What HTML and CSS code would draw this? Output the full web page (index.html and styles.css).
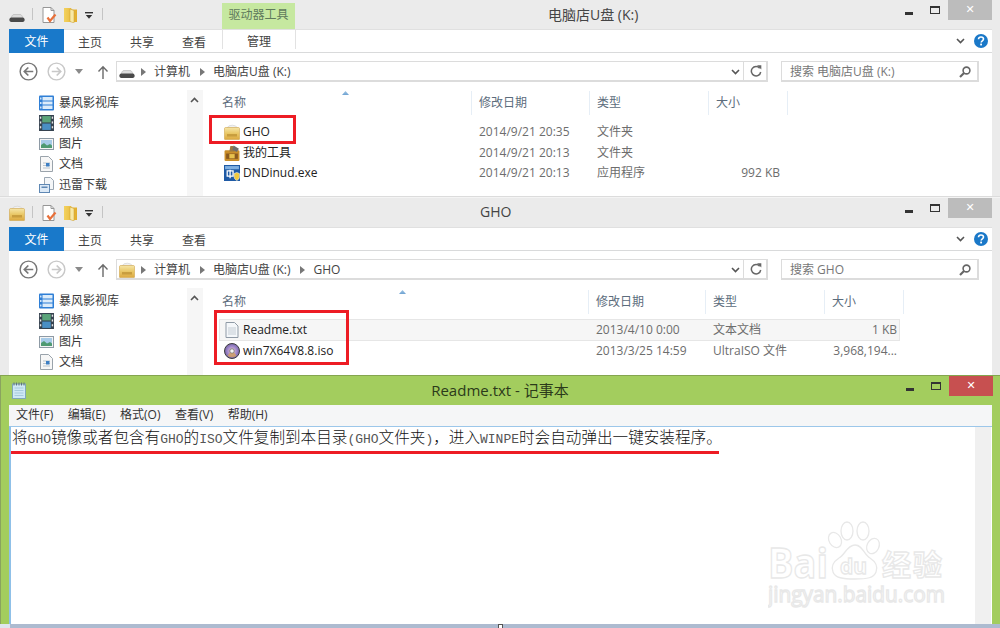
FILE: index.html
```html
<!DOCTYPE html>
<html lang="zh-CN">
<head>
<meta charset="utf-8">
<title>Readme.txt - 记事本</title>
<link rel="stylesheet" href="styles.css">
</head>
<body>
<svg class="sprite" width="0" height="0" aria-hidden="true">
  <defs>
    <linearGradient id="gold" x1="0" y1="0" x2="0" y2="1"><stop offset="0" stop-color="#f6e6a8"/><stop offset=".5" stop-color="#e9c766"/><stop offset="1" stop-color="#dca941"/></linearGradient>
    <linearGradient id="qaf" x1="0" y1="0" x2="1" y2="0"><stop offset="0" stop-color="#f3d25f"/><stop offset="1" stop-color="#e2ad2c"/></linearGradient>
    <radialGradient id="disc" cx=".5" cy=".5" r=".55"><stop offset="0" stop-color="#f2d9b0"/><stop offset=".5" stop-color="#a98fd0"/><stop offset="1" stop-color="#6a5aa0"/></radialGradient>
    <symbol id="i-drive" viewBox="0 0 16 9"><path d="M1 7l2.200-4.400C3.600 2 4 1.500 5 1.500h6c1 0 1.400.5 1.800 1.100L15 7z" fill="#dcdcdc" stroke="#a8a8a8" stroke-width=".5"/><rect x=".5" y="4.500" width="15" height="4.500" rx="1.800" fill="#4a4a4a"/></symbol>
    <symbol id="i-gho" viewBox="0 0 16 16"><path d="M3 4a5.500 4 0 0 1 10.500 0z" fill="#f1f1f1" stroke="#cfcfcf" stroke-width=".6"/><path d="M.5 4.500C.5 4 1 3.500 1.500 3.500h13c.5 0 1 .5 1 1V15a.5.5 0 0 1-.5.5H1a.5.5 0 0 1-.5-.5z" fill="url(#gold)" stroke="#d0a64e" stroke-width=".6"/><rect x="3" y="10" width="10" height="2.500" fill="#b98c30" opacity=".65"/></symbol>
    <symbol id="i-doc" viewBox="0 0 15 16"><path d="M1 .5h8L12 3.500v12H1z" fill="#fff" stroke="#969696"/><path d="M9 .5v3h3" fill="none" stroke="#969696"/><path d="M5.500 10.500l2.500 3.500 5.500-6.500" fill="none" stroke="#e8703a" stroke-width="2.200"/></symbol>
    <symbol id="i-qaf" viewBox="0 0 13 16"><path d="M0 1h7l1 1.500h5V15H0z" fill="url(#qaf)"/><path d="M6 2l4 1.500V16l-4-1.500z" fill="#f8e9a6" stroke="#c9982a" stroke-width=".5"/></symbol>
    <symbol id="i-drop" viewBox="0 0 8 7"><rect y="0" width="8" height="1.400" fill="#333"/><path d="M.8 3h6.400L4 6.800z" fill="#333"/></symbol>
    <symbol id="i-back" viewBox="0 0 20 20"><circle cx="10" cy="10" r="8.800" fill="#fff" stroke="currentColor" stroke-width="1.500"/><path d="M15 10H6M9.800 5.800L5.600 10l4.200 4.200" fill="none" stroke="currentColor" stroke-width="1.800"/></symbol>
    <symbol id="i-fwd" viewBox="0 0 20 20"><circle cx="10" cy="10" r="8.800" fill="#fff" stroke="currentColor" stroke-width="1.500"/><path d="M5 10h9M10.200 5.800l4.200 4.200-4.200 4.200" fill="none" stroke="currentColor" stroke-width="1.800"/></symbol>
    <symbol id="i-caret" viewBox="0 0 8 5"><path d="M0 0h8L4 5z" fill="#8a8a8a"/></symbol>
    <symbol id="i-up" viewBox="0 0 12 14"><path d="M6 14V2M1.500 6.500L6 1.800l4.500 4.700" fill="none" stroke="#6a6a6a" stroke-width="1.400"/></symbol>
    <symbol id="i-crumb" viewBox="0 0 5 8"><path d="M0 0l5 4-5 4z" fill="#777"/></symbol>
    <symbol id="i-chev" viewBox="0 0 9 6"><path d="M1 1l3.500 3.500L8 1" fill="none" stroke="#555" stroke-width="1.600"/></symbol>
    <symbol id="i-refresh" viewBox="0 0 12 12"><path d="M9.700 3.200A4.700 4.700 0 1 0 10.700 7" fill="none" stroke="#666" stroke-width="1.500"/><path d="M7 .2h4.300v4.300z" fill="#666"/></symbol>
    <symbol id="i-search" viewBox="0 0 12 12"><circle cx="7.500" cy="4.500" r="3.400" fill="none" stroke="#666" stroke-width="1.600"/><path d="M5 7L1 11" stroke="#666" stroke-width="2.200"/></symbol>
    <symbol id="i-help" viewBox="0 0 14 14"><circle cx="7" cy="7" r="7" fill="#1a78c8"/><path d="M4.500 5.200C4.600 3.700 5.700 3 7 3c1.400 0 2.500.8 2.500 2.100 0 1.800-2.300 1.800-2.300 3.500" fill="none" stroke="#fff" stroke-width="1.600"/><rect x="6.200" y="9.600" width="1.800" height="1.800" fill="#fff"/></symbol>
    <symbol id="i-lib" viewBox="0 0 15 15"><rect width="15" height="15" rx="1" fill="#2f7fd6"/><rect x="3.500" y="1.500" width="10" height="3.500" fill="#dcecfa"/><rect x="3.500" y="6" width="10" height="3" fill="#dcecfa"/><rect x="3.500" y="10" width="10" height="3.500" fill="#dcecfa"/><rect x="1" y="2" width="1.500" height="2" fill="#cfe4f8"/><rect x="1" y="6.500" width="1.500" height="2" fill="#cfe4f8"/><rect x="1" y="11" width="1.500" height="2" fill="#cfe4f8"/></symbol>
    <symbol id="i-film" viewBox="0 0 14 15"><rect width="14" height="15" fill="#35424f"/><rect x="3" y="1" width="8" height="6" fill="#5aa47a"/><rect x="3" y="8" width="8" height="6" fill="#4a8fc4"/><rect x=".8" y="1.500" width="1.300" height="2" fill="#e6e6e6"/><rect x=".8" y="6" width="1.300" height="2" fill="#e6e6e6"/><rect x=".8" y="10.500" width="1.300" height="2" fill="#e6e6e6"/><rect x="11.900" y="1.500" width="1.300" height="2" fill="#e6e6e6"/><rect x="11.900" y="6" width="1.300" height="2" fill="#e6e6e6"/><rect x="11.900" y="10.500" width="1.300" height="2" fill="#e6e6e6"/></symbol>
    <symbol id="i-pic" viewBox="0 0 15 12"><rect x=".5" y=".5" width="14" height="11" fill="#f4f4f4" stroke="#8e9aa5"/><rect x="2" y="2" width="11" height="8" fill="#a7cbe8"/><path d="M2 10V7l3-2 3 2.500L11 6l2 1.500V10z" fill="#4f9a72"/></symbol>
    <symbol id="i-file" viewBox="0 0 13 16"><path d="M.5.500h8l4 4v11H.5z" fill="#f7f7f7" stroke="#9aa3ab"/><path d="M3 7h7M3 9.500h7M3 12h7" stroke="#b9c4cd"/><rect x="6" y="7" width="3.500" height="3.500" fill="#3d7fc4"/></symbol>
    <symbol id="i-dl" viewBox="0 0 15 16"><path d="M5.500.5h6l3 3v9h-9z" fill="#f4f6f8" stroke="#9aa6b2"/><rect x=".5" y="7.500" width="10" height="8" fill="#dce9f6" stroke="#5f88b4"/><rect x="2.500" y="9.500" width="6" height="1.500" fill="#5f88b4"/></symbol>
    <symbol id="i-tool" viewBox="0 0 15 15"><rect x=".5" y="5" width="14" height="10" rx="1" fill="#c98e2a"/><rect x="2" y="8" width="11" height="5" fill="#8a5a20"/><path d="M6 1l3 0 1 5H5z" fill="#9a7a45"/><path d="M9 .5l5 3-2 3-4-2z" fill="#6e6e6e"/><rect x="5" y="8.500" width="5" height="4" fill="#e7c14d"/></symbol>
    <symbol id="i-exe" viewBox="0 0 15 15"><rect width="15" height="15" fill="#1f5aa5"/><rect x="1" y="1" width="13" height="3" fill="#7fb0e2"/><path d="M3 5.500h5.500v5H3zM5.700 4.500v8" fill="none" stroke="#fff" stroke-width="1.200"/><path d="M9.500 8l2.500-1 2.500 1v3c0 2-1.500 3-2.500 3.500-1-.5-2.500-1.500-2.500-3.500z" fill="#f2c93c" stroke="#fff" stroke-width=".5"/></symbol>
    <symbol id="i-txt" viewBox="0 0 13 16"><path d="M.5.500h8.500l3.500 3.500v11.500H.5z" fill="#f4f7fa" stroke="#8f9aa6"/><path d="M2.500 6h8M2.500 8h8M2.500 10h8M2.500 12h8" stroke="#c4ccd4"/></symbol>
    <symbol id="i-iso" viewBox="0 0 16 16"><circle cx="8" cy="8" r="7.500" fill="url(#disc)" stroke="#3c3c3c"/><path d="M3.500 12.500A6.400 6.400 0 0 0 12.500 12.500L10 9.500h-4z" fill="#d7a35a" opacity=".75"/><circle cx="8" cy="8" r="2.200" fill="#f4f4f4" stroke="#555" stroke-width=".6"/></symbol>
    <symbol id="i-note" viewBox="0 0 14 17"><rect x=".5" y="2" width="13" height="14.500" fill="#cfe8f4" stroke="#7fa7b8"/><path d="M2.500 6h9M2.500 8.500h9M2.500 11h9M2.500 13.500h9" stroke="#a6cbdc"/><path d="M2 .5v3M4.500.5v3M7 .5v3M9.500.5v3M12 .5v3" stroke="#60727c"/></symbol>
  </defs>
</svg>

<main class="desktop">
  <section class="explorer first">
    <header class="titlebar">
      <div class="quick">
        <svg class="qa-drive"><use href="#i-drive"/></svg>
        <span class="qa-sep"></span>
        <svg class="qa-doc"><use href="#i-doc"/></svg>
        <svg class="qa-folder"><use href="#i-qaf"/></svg>
        <svg class="qa-drop"><use href="#i-drop"/></svg>
        <span class="qa-sep"></span>
      </div>
      <div class="context-tab">驱动器工具</div>
      <h1 class="win-title title-first">电脑店U盘 (K:)</h1>
      <div class="win-controls">
        <span class="ctl-min"></span><span class="ctl-max"></span><span class="ctl-close">✕</span>
      </div>
    </header>
    <nav class="ribbon">
      <span class="tab tab-file">文件</span>
      <span class="tab">主页</span>
      <span class="tab">共享</span>
      <span class="tab">查看</span>
      <span class="tab tab-manage">管理</span>
      <svg class="rb-chev"><use href="#i-chev"/></svg>
      <svg class="rb-help"><use href="#i-help"/></svg>
    </nav>
    <div class="navbar">
      <svg class="nv-back"><use href="#i-back"/></svg>
      <svg class="nv-fwd"><use href="#i-fwd"/></svg>
      <svg class="nv-caret"><use href="#i-caret"/></svg>
      <svg class="nv-up"><use href="#i-up"/></svg>
      <div class="address">
        <svg class="ad-drive"><use href="#i-drive"/></svg>
        <svg class="crumb"><use href="#i-crumb"/></svg><span>计算机</span>
        <svg class="crumb"><use href="#i-crumb"/></svg><span>电脑店U盘 (K:)</span>
        <svg class="ad-chev"><use href="#i-chev"/></svg>
        <span class="ad-refresh"><svg><use href="#i-refresh"/></svg></span>
      </div>
      <div class="search"><span>搜索 电脑店U盘 (K:)</span><svg><use href="#i-search"/></svg></div>
    </div>
    <div class="content">
      <aside class="sidebar">
        <div class="side-item"><svg><use href="#i-lib"/></svg>暴风影视库</div>
        <div class="side-item"><svg><use href="#i-film"/></svg>视频</div>
        <div class="side-item"><svg><use href="#i-pic"/></svg>图片</div>
        <div class="side-item"><svg><use href="#i-file"/></svg>文档</div>
        <div class="side-item"><svg><use href="#i-dl"/></svg>迅雷下载</div>
      </aside>
      <div class="side-scroll"><svg class="scroll-up"><use href="#i-chev"/></svg></div>
      <div class="files cols-first">
        <div class="file-head">
          <span>名称<i class="sort"></i></span><span>修改日期</span><span>类型</span><span>大小</span>
        </div>
        <div class="file-row"><span class="fname"><svg><use href="#i-gho"/></svg>GHO</span><span>2014/9/21 20:35</span><span>文件夹</span><span></span></div>
        <div class="file-row"><span class="fname"><svg><use href="#i-tool"/></svg>我的工具</span><span>2014/9/21 20:13</span><span>文件夹</span><span></span></div>
        <div class="file-row"><span class="fname"><svg><use href="#i-exe"/></svg>DNDinud.exe</span><span>2014/9/21 20:13</span><span>应用程序</span><span class="fsize">992 KB</span></div>
        <span class="redbox redbox-gho"></span>
      </div>
    </div>
  </section>

  <section class="explorer second">
    <header class="titlebar">
      <div class="quick">
        <svg class="qa-gho"><use href="#i-gho"/></svg>
        <span class="qa-sep"></span>
        <svg class="qa-doc"><use href="#i-doc"/></svg>
        <svg class="qa-folder"><use href="#i-qaf"/></svg>
        <svg class="qa-drop"><use href="#i-drop"/></svg>
        <span class="qa-sep"></span>
      </div>
      <h1 class="win-title title-second">GHO</h1>
      <div class="win-controls">
        <span class="ctl-min"></span><span class="ctl-max"></span><span class="ctl-close">✕</span>
      </div>
    </header>
    <nav class="ribbon">
      <span class="tab tab-file">文件</span>
      <span class="tab">主页</span>
      <span class="tab">共享</span>
      <span class="tab">查看</span>
      <svg class="rb-chev"><use href="#i-chev"/></svg>
      <svg class="rb-help"><use href="#i-help"/></svg>
    </nav>
    <div class="navbar">
      <svg class="nv-back"><use href="#i-back"/></svg>
      <svg class="nv-fwd"><use href="#i-fwd"/></svg>
      <svg class="nv-caret"><use href="#i-caret"/></svg>
      <svg class="nv-up"><use href="#i-up"/></svg>
      <div class="address">
        <svg class="ad-gho"><use href="#i-gho"/></svg>
        <svg class="crumb"><use href="#i-crumb"/></svg><span>计算机</span>
        <svg class="crumb"><use href="#i-crumb"/></svg><span>电脑店U盘 (K:)</span>
        <svg class="crumb"><use href="#i-crumb"/></svg><span>GHO</span>
        <svg class="ad-chev"><use href="#i-chev"/></svg>
        <span class="ad-refresh"><svg><use href="#i-refresh"/></svg></span>
      </div>
      <div class="search"><span>搜索 GHO</span><svg><use href="#i-search"/></svg></div>
    </div>
    <div class="content">
      <aside class="sidebar">
        <div class="side-item"><svg><use href="#i-lib"/></svg>暴风影视库</div>
        <div class="side-item"><svg><use href="#i-film"/></svg>视频</div>
        <div class="side-item"><svg><use href="#i-pic"/></svg>图片</div>
        <div class="side-item"><svg><use href="#i-file"/></svg>文档</div>
      </aside>
      <div class="side-scroll"><svg class="scroll-up"><use href="#i-chev"/></svg></div>
      <div class="files cols-second">
        <div class="file-head">
          <span>名称<i class="sort"></i></span><span>修改日期</span><span>类型</span><span>大小</span>
        </div>
        <div class="file-row selected"><span class="fname"><svg><use href="#i-txt"/></svg>Readme.txt</span><span>2013/4/10 0:00</span><span>文本文档</span><span class="fsize">1 KB</span></div>
        <div class="file-row"><span class="fname"><svg><use href="#i-iso"/></svg>win7X64V8.8.iso</span><span>2013/3/25 14:59</span><span>UltraISO 文件</span><span class="fsize">3,968,194...</span></div>
        <span class="redbox redbox-files"></span>
      </div>
    </div>
  </section>

  <section class="notepad">
    <header class="np-title">
      <svg class="np-icon"><use href="#i-note"/></svg>
      <h1 class="np-name">Readme.txt - 记事本</h1>
      <div class="win-controls np-controls">
        <span class="ctl-min"></span><span class="ctl-max"></span><span class="ctl-close">✕</span>
      </div>
    </header>
    <div class="np-menu">
      <span>文件(F)</span><span>编辑(E)</span><span>格式(O)</span><span>查看(V)</span><span>帮助(H)</span>
    </div>
    <div class="np-body">
      <div class="np-text">
        <p>将<b>GHO</b>镜像或者包含有<b>GHO</b>的<b>ISO</b>文件复制到本目录<b>(GHO</b>文件夹<b>)</b>&#xFF0C;进入<b>WINPE</b>时会自动弹出一键安装程序。</p>
        <span class="red-underline"></span>
      </div>
      <div class="np-scroll"></div>
    </div>
    <svg class="watermark" viewBox="0 0 180 92" width="180" height="92">
      <text class="wm-big" x="0" y="58" textLength="60" lengthAdjust="spacingAndGlyphs">Bai</text>
      <ellipse class="wm-shape" cx="67" cy="20" rx="6" ry="8" transform="rotate(-30 67 20)"/>
      <ellipse class="wm-shape" cx="79" cy="11" rx="6" ry="9"/>
      <ellipse class="wm-shape" cx="95" cy="11" rx="6" ry="9"/>
      <ellipse class="wm-shape" cx="105" cy="26" rx="6" ry="8" transform="rotate(25 105 26)"/>
      <path class="wm-shape" d="M87 25c8 0 9 10 15 13 6 4 8 9 6 14-2 6-9 7-21 7s-20-1-22-7c-2-5 0-10 6-14 6-3 8-13 16-13z"/>
      <text class="wm-du" x="72" y="54">du</text>
      <text class="wm-cn" x="114" y="56" textLength="60">经验</text>
      <text class="wm-url" x="0" y="82" textLength="177" lengthAdjust="spacingAndGlyphs">jingyan.baidu.com</text>
    </svg>
    <div class="np-bottom"><span class="np-corner"></span><span class="np-handle"></span></div>
  </section>
</main>
</body>
</html>
```
FILE: styles.css
```css
* { box-sizing: border-box; }
html, body { margin: 0; padding: 0; }
body {
  width: 1000px;
  height: 628px;
  overflow: hidden;
  background: #fff;
  font: 12px/1.2 "Open Sans", "Noto Sans CJK SC", sans-serif;
  color: #333;
}
.sprite { position: absolute; }
svg { display: block; flex: none; }
h1 { margin: 0; font-weight: 400; }
.desktop { display: flex; flex-direction: column; width: 1000px; height: 628px; }

/* Explorer window */
.explorer {
  display: flex;
  flex-direction: column;
  background: #ebebeb;
  padding: 0 8px 0 9px;
  overflow: hidden;
  flex: none;
  border-bottom: 1px solid #dcdcdc;
}
.first { height: 197px; }
.second { height: 178px; border-top: 1px solid #f4f4f4; border-bottom: 0; }

.titlebar {
  position: relative;
  height: 29px;
  flex: none;
  margin-left: -9px;
  margin-right: -8px;
  padding-left: 9px;
}
.quick { display: flex; align-items: center; height: 28px; }
.qa-drive { width: 16px; height: 9px; margin-top: 7px; }
.qa-gho { width: 16px; height: 16px; margin-top: 1px; }
.qa-sep { width: 1px; height: 12px; background: #c4c4c4; margin: 0 0 0 7px; }
.qa-doc { width: 15px; height: 16px; margin: 2px 0 0 9px; }
.qa-folder { width: 13px; height: 16px; margin: 2px 0 0 7px; }
.qa-drop { width: 8px; height: 7px; margin: 3px 0 0 8px; }
.qa-drop + .qa-sep { margin-left: 9px; }
.context-tab {
  position: absolute;
  left: 222px;
  top: 3px;
  width: 73px;
  height: 26px;
  padding-top: 5px;
  text-align: center;
  background: #c6e8a0;
  color: #5f7a5c;
}
.win-title {
  position: absolute;
  top: 5px;
  font-size: 14px;
  line-height: 20px;
  color: #444;
  white-space: nowrap;
}
.title-first { left: 548px; }
.title-second { left: 480px; top: 4px; }
.win-controls {
  position: absolute;
  right: 8px;
  top: 0;
  display: flex;
  width: 88px;
  height: 20px;
}
.ctl-min { width: 8px; height: 3px; background: #333; margin: 12px 0 0 1px; }
.ctl-max { width: 10px; height: 8px; border: 1px solid #333; border-top-width: 2px; margin: 6px 0 0 17px; }
.ctl-close {
  width: 44px;
  height: 20px;
  margin-left: 8px;
  background: #bcbcbc;
  color: #fff;
  font: 700 11px/20px "DejaVu Sans", sans-serif;
  text-align: center;
}

.ribbon {
  position: relative;
  display: flex;
  flex: none;
  height: 24px;
  background: #fff;
  border-top: 1px solid #e0e0e0;
  border-bottom: 1px solid #d9dadb;
}
.tab {
  width: 52px;
  line-height: 25px;
  text-align: center;
  color: #444;
}
.tab-file {
  width: 55px;
  height: 24px;
  margin-top: -1px;
  line-height: 26px;
  background: #1979ca;
  color: #fff;
}
.tab-manage {
  position: absolute;
  left: 213px;
  top: 0;
  width: 74px;
  height: 19px;
  line-height: 24px;
  border-left: 1px solid #e2e2e2;
  border-right: 1px solid #e2e2e2;
}
.rb-chev { position: absolute; right: 27px; top: 8px; width: 9px; height: 6px; }
.rb-help { position: absolute; right: 4px; top: 4px; width: 14px; height: 14px; }

.navbar {
  position: relative;
  display: flex;
  flex: none;
  align-items: center;
  height: 35px;
  padding: 2px 0 0 10px;
  background: #fff;
  color: #444;
}
.nv-back { width: 19px; height: 19px; color: #777; }
.nv-fwd { width: 19px; height: 19px; margin-left: 9px; color: #c8c8c8; }
.nv-caret { width: 8px; height: 5px; margin-left: 9px; }
.nv-up { width: 12px; height: 14px; margin-left: 14px; }
.address {
  display: flex;
  align-items: center;
  width: 652px;
  height: 21px;
  margin-left: 7px;
  padding-top: 2px;
  border: 1px solid #dcdcdc;
  border-width: 1px 2px 2px 1px;
  position: relative;
}
.ad-drive { width: 16px; height: 9px; margin: 3px -4px 0 2px; }
.ad-gho { width: 16px; height: 16px; margin: 0 -4px 0 2px; }
.crumb { width: 5px; height: 8px; margin: 0 8px 0 10px; }
.ad-chev { position: absolute; left: 614px; top: 7px; width: 9px; height: 6px; }
.ad-refresh {
  position: absolute;
  left: 626px;
  top: 0;
  width: 24px;
  height: 18px;
  border-left: 1px solid #dcdcdc;
  display: flex;
  align-items: center;
  justify-content: center;
}
.ad-refresh svg { width: 12px; height: 12px; }
.search {
  display: flex;
  align-items: center;
  justify-content: space-between;
  width: 198px;
  height: 21px;
  margin-left: 13px;
  padding: 2px 6px 0 8px;
  border: 1px solid #dcdcdc;
  border-width: 1px 2px 2px 1px;
  color: #777;
}
.search svg { width: 12px; height: 12px; }

.content { display: flex; flex: 1; min-height: 0; background: #fff; }
.sidebar { width: 178px; flex: none; padding-top: 4.500px; }
.side-item {
  display: flex;
  align-items: center;
  height: 20.500px;
  padding-left: 30px;
  color: #3a3a3a;
}
.side-item svg { width: 15px; height: 16px; margin-right: 5px; }
.side-scroll { width: 16px; flex: none; background: #f6f6f6; margin-top: 2px; padding: 7px 0 0 3px; }
.scroll-up { width: 9px; height: 6px; transform: rotate(180deg); }

.files { position: relative; flex: 1; padding-left: 19px; }
.file-head, .file-row { display: grid; align-items: center; }
.cols-first .file-head, .cols-first .file-row { grid-template-columns: 257px 118px 119px 72px; }
.cols-second .file-head, .cols-second .file-row { grid-template-columns: 374px 117px 119px 72px; }
.file-head { height: 24px; margin-top: 3px; margin-bottom: 7px; color: #5c6c7c; }
.cols-second .file-head { margin-top: 4px; margin-bottom: 5px; }
.file-head span { position: relative; height: 24px; line-height: 24px; }
.file-head span + span::before {
  content: "";
  position: absolute;
  left: -8px;
  top: 0;
  height: 24px;
  width: 1px;
  background: #e6eef6;
}
.file-head span:last-child::after {
  content: "";
  position: absolute;
  right: 0;
  top: 0;
  height: 24px;
  width: 1px;
  background: #e6eef6;
}
.sort {
  position: absolute;
  top: 0;
  width: 7px;
  height: 4px;
  background: linear-gradient(#9fc4e4, #6fa3d2);
  clip-path: polygon(50% 0, 100% 100%, 0 100%);
}
.cols-first .sort { left: 120px; }
.cols-second .sort { left: 177px; }
.file-row { height: 20.500px; color: #6d6d6d; }
.cols-second .file-row { height: 21.500px; }
.fname { display: flex; align-items: center; color: #222; margin-left: 2px; }
.fname svg { width: 16px; height: 16px; margin-right: 3px; }
.fsize { text-align: right; padding-right: 8px; }
.cols-second .fsize { padding-right: 7px; }
.selected {
  margin: 0 0 0 -3px;
  padding-left: 3px;
  width: 681px;
  background: #f6f6f6;
  box-shadow: inset 0 0 0 1px #e6e6e6;
}
.redbox { position: absolute; border: 3px solid #ed1c24; pointer-events: none; }
.redbox-gho { left: 6px; top: 27px; width: 87px; height: 29px; }
.redbox-files { left: 11px; top: 24px; width: 135px; height: 55px; }

/* Notepad */
.notepad {
  position: relative;
  flex: 1;
  min-height: 0;
  display: flex;
  flex-direction: column;
  background: #a3cd5e;
  border-top: 1px solid #84a54f;
  padding: 0 8px 0 9px;
  box-shadow: inset 1px 0 0 #8aa35f;
}
.np-title { position: relative; height: 29px; flex: none; margin: 0 -8px 0 -9px; }
.np-icon { position: absolute; left: 12px; top: 6px; width: 14px; height: 17px; }
.np-name {
  text-align: center;
  font-size: 15px;
  line-height: 29px;
  color: #2b3a1a;
}
.np-controls { right: 7px; top: 0; }
.np-controls .ctl-close { background: #c75050; }
.np-menu {
  display: flex;
  flex: none;
  gap: 14.500px;
  height: 21px;
  padding-left: 7px;
  align-items: center;
  background: #f5f6f7;
  color: #333;
}
.np-body {
  display: flex;
  flex: 1;
  min-height: 0;
  background: #fff;
  border-top: 1px solid #9cc7ea;
  border-left: 2px solid #8fc0e8;
}
.np-text { position: relative; flex: 1; padding: 0 0 0 1px; }
.np-text p {
  margin: -1px 0 0;
  font: 15.600px/20px "Noto Sans CJK SC", sans-serif;
  font-weight: 300;
  color: #111;
  white-space: nowrap;
}
.np-text b { font: 400 13px/20px "Liberation Mono", monospace; color: #555; }
.red-underline {
  position: absolute;
  left: 0;
  top: 24px;
  width: 708px;
  height: 3px;
  background: #ed1c24;
}
.np-scroll { width: 16px; flex: none; margin-right: 1px; background: #f0f0f0; }
.watermark { position: absolute; left: 768px; top: 144px; pointer-events: none; }
.watermark text, .wm-shape { fill: #fff; stroke: #e8e8e8; stroke-width: 1.300px; }
.wm-big { font: 700 42px "Open Sans", sans-serif; }
.wm-du { font: 700 21px "Open Sans", sans-serif; }
.wm-cn { font: 700 29px "Noto Sans CJK SC", sans-serif; }
.wm-url { font: 400 21px "Open Sans", sans-serif; }
.np-bottom {
  position: relative;
  flex: none;
  height: 4px;
  margin: 0 -8px 0 -9px;
  background: #adbbd0;
}
.np-corner { position: absolute; left: 0; top: 0; width: 10px; height: 4px; background: #dfe6f0; }
.np-handle { position: absolute; left: 498px; top: 0; width: 5px; height: 4px; background: #fff; border: 1px solid #555; border-bottom: 0; }
```
